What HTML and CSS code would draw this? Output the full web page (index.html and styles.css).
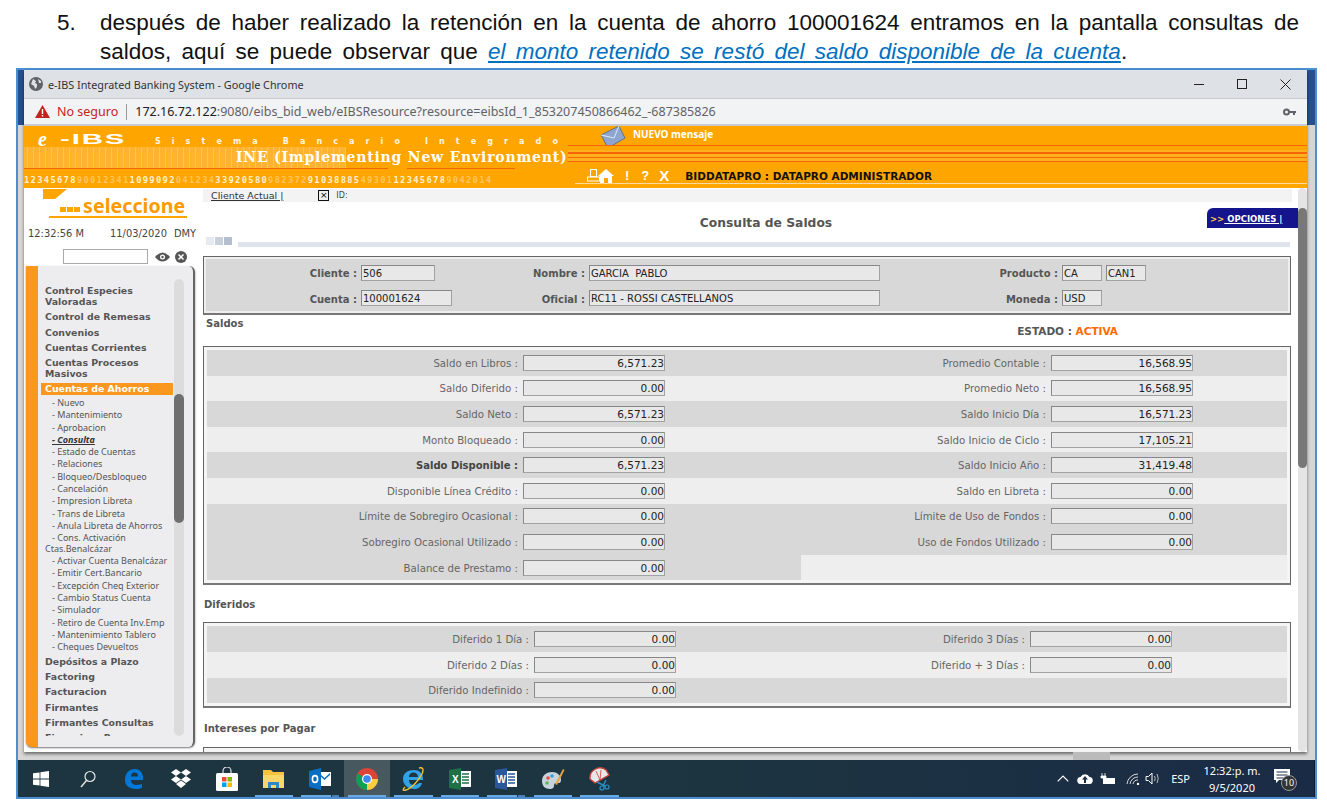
FILE: index.html
```html
<!DOCTYPE html>
<html lang="es">
<head>
  <meta charset="UTF-8">
  <title>Consulta de Saldos</title>
  <link rel="stylesheet" href="styles.css">
</head>
<body>
  <div class="note">
    <span class="note-num">5.</span>
    <div class="note-text">
      <p class="line-full">después de haber realizado la retención en la cuenta de ahorro 100001624 entramos en la pantalla consultas de</p>
      <p class="line-last">saldos, aquí se puede observar que <a href="#">el monto retenido se restó del saldo disponible de la cuenta</a>.</p>
    </div>
  </div>

  <div class="shot">
    <div class="browser">
      <div class="titlebar">
        <svg class="globe" width="14" height="14" viewBox="0 0 14 14"><circle cx="7" cy="7" r="7" fill="#5f6368"/><path d="M4 2l3 2-1 2 2 1v3l-2 2-1-3-3-2zM9 2l3 2 0 2-2 0z" fill="#dee1e6"/></svg>
        <span class="title-text">e-IBS Integrated Banking System - Google Chrome</span>
        <span class="win-btns">
          <svg width="10" height="10" viewBox="0 0 10 10"><path d="M0 5.5h10" stroke="#222" stroke-width="1"/></svg>
          <svg width="10" height="10" viewBox="0 0 10 10"><rect x=".5" y=".5" width="9" height="9" fill="none" stroke="#222"/></svg>
          <svg width="11" height="11" viewBox="0 0 11 11"><path d="M.5.5l10 10M10.5.5l-10 10" stroke="#222" stroke-width="1"/></svg>
        </span>
      </div>
      <div class="addressbar">
        <svg width="15" height="13" viewBox="0 0 15 13"><path d="M7.5 0L15 13H0z" fill="#c5221f"/><path d="M6.8 4h1.4v5H6.8zM6.8 10h1.4v1.4H6.8z" fill="#fff"/></svg>
        <span class="not-safe">No seguro</span>
        <span class="addr-sep"></span>
        <span class="url"><b>172.16.72.122</b>:9080/eibs_bid_web/eIBSResource?resource=eibsId_1_853207450866462_-687385826</span>
        <svg class="key" width="13" height="8" viewBox="0 0 13 8"><circle cx="3.5" cy="4" r="2.5" fill="none" stroke="#5f6368" stroke-width="2"/><path d="M6 3h7v2h-1v2h-2V5H6z" fill="#5f6368"/></svg>
      </div>

      <div class="banner">
        <div class="banner-row1">
          <span class="logo-e">e</span>
          <span class="logo-ibs">-IBS</span>
          <span class="sistema">Sistema Bancario Integrado</span>
          <svg class="envelope" width="26" height="24" viewBox="0 0 26 24"><path d="M1 10L19 1l6 12L8 23z" fill="#8ea6cf" stroke="#4a6390" stroke-width=".8"/><path d="M1 10l13 3L19 1" fill="none" stroke="#dfe7f5" stroke-width="1"/></svg>
          <span class="nuevo">NUEVO mensaje</span>
        </div>
        <div class="banner-row2">
          <div class="binary"></div>
          <span class="ine">INE (Implementing New Environment)</span>
          <div class="stripes"></div>
          <div class="redline redline-a"></div>
          <div class="redline redline-b"></div>
        </div>
        <div class="banner-row3">
          <span class="digits"><i>12345678</i>90012341<i>1099092</i>041234<i>33920580</i>982372<i>91038885</i>49301<i>12345678</i>9042014</span>
          <div class="tools">
            <svg width="13" height="13" viewBox="0 0 13 13"><rect x="3.5" y=".5" width="6" height="7" fill="none" stroke="#fff"/><rect x=".5" y="8" width="12" height="4" fill="none" stroke="#fff"/></svg>
            <svg class="tool-home" width="16" height="14" viewBox="0 0 16 14"><path d="M8 0l8 7h-2v7h-4V9H6v5H2V7H0z" fill="#fff"/></svg>
            <span class="tool-mark tool-bang">!</span>
            <span class="tool-mark tool-q">?</span>
            <span class="tool-mark tool-x">X</span>
            <span class="user">BIDDATAPRO : DATAPRO ADMINISTRADOR</span>
          </div>
        </div>
      </div>

      <div class="app">
        <aside class="side">
          <div class="brand">
            <div class="wedge"></div>
            <div class="brand-row">
              <span class="brand-dots"><i></i><i></i><i></i></span>
              <span class="brand-word">seleccione</span>
            </div>
            <div class="brand-line"></div>
          </div>
          <div class="clock"><span>12:32:56 M</span><span class="clock-date">11/03/2020</span><span>DMY</span></div>
          <div class="search">
            <span class="search-box"></span>
            <svg width="15" height="10" viewBox="0 0 15 10"><path d="M0 5q7.5-9 15 0q-7.5 9-15 0z" fill="#555"/><circle cx="7.5" cy="5" r="2.5" fill="#fff"/><circle cx="7.5" cy="5" r="1.2" fill="#555"/></svg>
            <svg width="12" height="12" viewBox="0 0 12 12"><circle cx="6" cy="6" r="6" fill="#555"/><path d="M3.5 3.5l5 5M8.5 3.5l-5 5" stroke="#fff" stroke-width="1.5"/></svg>
          </div>
          <nav class="menu">
            <div class="menu-list">
              <a class="m">Control Especies Valoradas</a>
              <a class="m">Control de Remesas</a>
              <a class="m">Convenios</a>
              <a class="m">Cuentas Corrientes</a>
              <a class="m">Cuentas Procesos Masivos</a>
              <a class="m m-on">Cuentas de Ahorros</a>
              <a class="s">- Nuevo</a>
              <a class="s">- Mantenimiento</a>
              <a class="s">- Aprobacion</a>
              <a class="s s-on">- Consulta</a>
              <a class="s">- Estado de Cuentas</a>
              <a class="s">- Relaciones</a>
              <a class="s">- Bloqueo/Desbloqueo</a>
              <a class="s">- Cancelación</a>
              <a class="s">- Impresion Libreta</a>
              <a class="s">- Trans de Libreta</a>
              <a class="s">- Anula Libreta de Ahorros</a>
              <a class="s s-wrap">- Cons. Activación Ctas.Benalcázar</a>
              <a class="s">- Activar Cuenta Benalcázar</a>
              <a class="s">- Emitir Cert.Bancario</a>
              <a class="s">- Excepción Cheq Exterior</a>
              <a class="s">- Cambio Status Cuenta</a>
              <a class="s">- Simulador</a>
              <a class="s">- Retiro de Cuenta Inv.Emp</a>
              <a class="s">- Mantenimiento Tablero</a>
              <a class="s s-end">- Cheques Devueltos</a>
              <a class="m">Depósitos a Plazo</a>
              <a class="m">Factoring</a>
              <a class="m">Facturacion</a>
              <a class="m">Firmantes</a>
              <a class="m">Firmantes Consultas</a>
              <a class="m">Financiera Banco</a>
            </div>
            <div class="menu-scroll"><div class="menu-thumb"></div></div>
          </nav>
        </aside>

        <main class="main">
          <div class="clientbar">
            <a class="client-link">Cliente Actual |</a>
            <span class="client-x">×</span>
            <span class="client-id">ID:</span>
          </div>
          <div class="title-row">
            <h1 class="page-title">Consulta de Saldos</h1>
            <div class="options"><b>&gt;&gt;</b><u>&nbsp;OPCIONES |</u></div>
          </div>
          <div class="content">
            <div class="divider"><span class="div-sq"><i></i><i></i><i></i></span><span class="div-bar"></span></div>

            <section class="panel panel-head">
              <div class="head-row">
                <span class="hl hl-1">Cliente :</span><span class="field fl w74">506</span>
                <span class="hl hl-2">Nombre :</span><span class="field fl w291">GARCIA&nbsp; PABLO</span>
                <span class="hl hl-3">Producto :</span><span class="field fl w40">CA</span><span class="field fl w40 ml4">CAN1</span>
              </div>
              <div class="head-row">
                <span class="hl hl-1">Cuenta :</span><span class="field fl w91">100001624</span>
                <span class="hl hl-2 gap-b">Oficial :</span><span class="field fl w291">RC11 - ROSSI CASTELLANOS</span>
                <span class="hl hl-3">Moneda :</span><span class="field fl w40">USD</span>
              </div>
            </section>

            <div class="saldos-head">
              <h2 class="sec">Saldos</h2>
              <div class="estado">ESTADO : <span>ACTIVA</span></div>
            </div>

            <section class="panel">
              <div class="row dark"><div class="cell-l"><span class="lbl">Saldo en Libros :</span><span class="field">6,571.23</span></div><div class="cell-r"><span class="lbl">Promedio Contable :</span><span class="field">16,568.95</span></div></div>
              <div class="row light"><div class="cell-l"><span class="lbl">Saldo Diferido :</span><span class="field">0.00</span></div><div class="cell-r"><span class="lbl">Promedio Neto :</span><span class="field">16,568.95</span></div></div>
              <div class="row dark"><div class="cell-l"><span class="lbl">Saldo Neto :</span><span class="field">6,571.23</span></div><div class="cell-r"><span class="lbl">Saldo Inicio Día :</span><span class="field">16,571.23</span></div></div>
              <div class="row light"><div class="cell-l"><span class="lbl">Monto Bloqueado :</span><span class="field">0.00</span></div><div class="cell-r"><span class="lbl">Saldo Inicio de Ciclo :</span><span class="field">17,105.21</span></div></div>
              <div class="row dark"><div class="cell-l"><span class="lbl strong">Saldo Disponible :</span><span class="field">6,571.23</span></div><div class="cell-r"><span class="lbl">Saldo Inicio Año :</span><span class="field">31,419.48</span></div></div>
              <div class="row light"><div class="cell-l"><span class="lbl">Disponible Línea Crédito :</span><span class="field">0.00</span></div><div class="cell-r"><span class="lbl">Saldo en Libreta :</span><span class="field">0.00</span></div></div>
              <div class="row dark"><div class="cell-l"><span class="lbl">Límite de Sobregiro Ocasional :</span><span class="field">0.00</span></div><div class="cell-r"><span class="lbl">Límite de Uso de Fondos :</span><span class="field">0.00</span></div></div>
              <div class="row dark"><div class="cell-l"><span class="lbl">Sobregiro Ocasional Utilizado :</span><span class="field">0.00</span></div><div class="cell-r"><span class="lbl">Uso de Fondos Utilizado :</span><span class="field">0.00</span></div></div>
              <div class="row light"><div class="cell-l dark"><span class="lbl">Balance de Prestamo :</span><span class="field">0.00</span></div><div class="cell-r"></div></div>
            </section>

            <h2 class="sec sec-dif">Diferidos</h2>
            <section class="panel panel-dif">
              <div class="row dark"><div class="cell-l"><span class="lbl">Diferido 1 Día :</span><span class="field">0.00</span></div><div class="cell-r"><span class="lbl">Diferido 3 Días :</span><span class="field">0.00</span></div></div>
              <div class="row light"><div class="cell-l"><span class="lbl">Diferido 2 Días :</span><span class="field">0.00</span></div><div class="cell-r"><span class="lbl">Diferido + 3 Días :</span><span class="field">0.00</span></div></div>
              <div class="row dark"><div class="cell-l"><span class="lbl">Diferido Indefinido :</span><span class="field">0.00</span></div><div class="cell-r"></div></div>
            </section>

            <h2 class="sec sec-int">Intereses por Pagar</h2>
            <section class="panel panel-cut"></section>
          </div>
        </main>

        <div class="scrollbar"><div class="scroll-thumb"></div></div>
      </div>
    </div>
    <div class="behind"><span class="behind-tab"></span></div>

    <div class="taskbar">
      <span class="tb"><svg width="16" height="16" viewBox="0 0 16 16"><path d="M0 2.3l6.6-.9v6.2H0zM7.4 1.3L16 0v7.6H7.4zM0 8.4h6.6v6.2L0 13.7zM7.4 8.4H16V16l-8.6-1.3z" fill="#fff"/></svg></span>
      <span class="tb"><svg width="16" height="18" viewBox="0 0 16 18"><circle cx="10" cy="6.5" r="5" fill="none" stroke="#e8e8e8" stroke-width="1.2"/><path d="M6.5 10.5L1 17" stroke="#e8e8e8" stroke-width="1.4"/></svg></span>
      <span class="tb"><svg width="20" height="22" viewBox="0 0 20 22"><path d="M1 12C1 5 5 1 11 1c5 0 8 4 8 9v2H7c0 3 2 5 6 5 2 0 4-.5 5-1.200v4c-1.500.8-3.500 1.200-6 1.200C5 21 1 17.500 1 12zM7 8.500h7C14 6 13 4.500 10.500 4.500 8.500 4.500 7 6 7 8.500z" fill="#0078d7"/></svg></span>
      <span class="tb"><svg width="22" height="20" viewBox="0 0 22 20"><path d="M6 0l5 3.500L6 7 1 3.500zM16 0l5 3.500L16 7l-5-3.500zM6 7l5 3.500L6 14l-5-3.500zM16 7l5 3.500L16 14l-5-3.500zM6 15l5-3.500 5 3.500-5 4z" fill="#fff"/></svg></span>
      <span class="tb"><svg width="22" height="24" viewBox="0 0 22 24"><path d="M7 7V4a4 4 0 018 0v3" fill="none" stroke="#ddd" stroke-width="1.200"/><rect y="6" width="22" height="18" rx="1.500" fill="#fff"/><rect x="6" y="10" width="4.500" height="4.500" fill="#e8502a"/><rect x="11.500" y="10" width="4.500" height="4.500" fill="#7fb900"/><rect x="6" y="15.500" width="4.500" height="4.500" fill="#00a1ef"/><rect x="11.500" y="15.500" width="4.500" height="4.500" fill="#ffb900"/></svg></span>
      <span class="tb tb-run"><svg width="21" height="19" viewBox="0 0 21 19"><path d="M0 1h8l2 2h11v16H0z" fill="#f6c33c"/><path d="M0 6h21v13H0z" fill="#fbd668"/><path d="M5 19v-6h11v6h-3v-3H8v3z" fill="#2f87c8"/></svg></span>
      <span class="tb tb-run tb-stack"><svg width="22" height="22" viewBox="0 0 22 22"><path d="M9 4h13v14H9z" fill="#fff"/><path d="M10 5l5.500 5L21 5v2l-5.500 5L10 7z" fill="#0a6fc2"/><path d="M0 3l12-3v22L0 19z" fill="#0a6fc2"/><ellipse cx="6" cy="11" rx="2.600" ry="3.400" fill="none" stroke="#fff" stroke-width="1.600"/></svg></span>
      <span class="tb tb-run tb-active"><svg width="22" height="22" viewBox="0 0 22 22"><circle cx="11" cy="11" r="11" fill="#db4437"/><path d="M11 11L1.500 5.500A11 11 0 0 0 11 22z" fill="#0f9d58"/><path d="M11 11h11A11 11 0 0 1 11 22z" fill="#ffcd40"/><circle cx="11" cy="11" r="5" fill="#fff"/><circle cx="11" cy="11" r="3.800" fill="#4285f4"/></svg></span>
      <span class="tb tb-run"><svg width="22" height="24" viewBox="0 0 22 24"><path d="M1 12C1 6 6 3 12 3c5 0 9 3 9 9v1H7c0 3 2 5 5 5 2 0 4-1 5-2h3c-1 4-4 6-8 6-6 0-11-4-11-10zM7 10h9c0-3-2-4.500-4.500-4.500S7 7 7 10z" fill="#2fa3e6"/><path d="M3 20C0 23 1 24 4 23c6-2 13-10 16-16 2-5 1-7-3-6" fill="none" stroke="#f2c12e" stroke-width="1.400"/></svg></span>
      <span class="tb tb-run"><svg width="22" height="22" viewBox="0 0 22 22"><path d="M10 3h12v16H10z" fill="#fff"/><path d="M13 6h7M13 9h7M13 12h7M13 15h7" stroke="#1e7145" stroke-width="1.400"/><path d="M0 2l12-2v22L0 20z" fill="#1e7145"/><text x="3" y="15" class="ico-letter">X</text></svg></span>
      <span class="tb tb-run tb-stack"><svg width="22" height="22" viewBox="0 0 22 22"><path d="M10 3h12v16H10z" fill="#fff"/><path d="M13 6h7M13 9h7M13 12h7M13 15h7" stroke="#2b579a" stroke-width="1.400"/><path d="M0 2l12-2v22L0 20z" fill="#2b579a"/><text x="1.500" y="15" class="ico-letter">W</text></svg></span>
      <span class="tb tb-run"><svg width="24" height="24" viewBox="0 0 24 24"><path d="M1 14C1 8 6 5 11 5c5 0 9 3 9 8 0 4-3 3-5 3s-2 2-2 3-1 3-4 3C4 22 1 19 1 14z" fill="#c8d4dc"/><circle cx="7" cy="11" r="1.800" fill="#e84c3d"/><circle cx="11" cy="9" r="1.800" fill="#3c9be0"/><circle cx="6" cy="16" r="1.800" fill="#5cb85c"/><path d="M14 17L22 2l1.500 1L16 18z" fill="#e8a33c"/></svg></span>
      <span class="tb tb-run"><svg width="24" height="24" viewBox="0 0 24 24"><path d="M3 12A10 10 0 0 1 19 3l3 5-14 8z" fill="#e8e8e8" stroke="#c9413a" stroke-width="1.400"/><path d="M9 4l4 9M14 3l-1 10" stroke="#c9413a" stroke-width=".8"/><path d="M10 15l8 4M19 13l-3 6" stroke="#2a8fc9" stroke-width="1.400"/><circle cx="15" cy="21" r="2" fill="none" stroke="#2a8fc9" stroke-width="1.200"/><circle cx="20" cy="20" r="2" fill="none" stroke="#2a8fc9" stroke-width="1.200"/></svg></span>

      <div class="tray">
        <svg width="12" height="7" viewBox="0 0 12 7"><path d="M.7 6.300L6 1l5.300 5.300" fill="none" stroke="#fff" stroke-width="1.200"/></svg>
        <svg class="tray-cloud" width="16" height="11" viewBox="0 0 16 11"><path d="M4 11a3.500 3.500 0 0 1-.5-7A5 5 0 0 1 12.500 4 3.500 3.500 0 0 1 12 11z" fill="#fff"/><path d="M8 3l3 3.500H9V10H7V6.500H5z" fill="#1b2c44"/></svg>
        <svg class="tray-batt" width="16" height="11" viewBox="0 0 16 11"><path d="M2 0v3M5 0v3M1 3h5v2H1z" stroke="#fff" fill="#fff" stroke-width=".8"/><rect x="3" y="5" width="12" height="6" fill="#fff"/></svg>
        <svg class="tray-wifi" width="14" height="12" viewBox="0 0 14 12"><path d="M1 11a11 11 0 0 1 11-10M4 11a8 8 0 0 1 8-7M7 11a5 5 0 0 1 5-4" fill="none" stroke="#d8d8d8" stroke-width="1"/><circle cx="12" cy="11" r="1.200" fill="#fff"/></svg>
        <svg class="tray-vol" width="16" height="13" viewBox="0 0 16 13"><path d="M1 4.500h2.500L7 1v11L3.500 8.500H1z" fill="none" stroke="#fff"/><path d="M9.500 4q1.500 2.500 0 5M12 2q2.500 4.500 0 9" fill="none" stroke="#bbb"/></svg>
        <span class="tray-lang">ESP</span>
        <span class="tray-clock"><span>12:32:p. m.</span><span>9/5/2020</span></span>
        <span class="tray-note">
          <svg width="16" height="14" viewBox="0 0 16 14"><path d="M0 0h16v11H5l-3 3v-3H0z" fill="#fff"/><path d="M2.500 3h11M2.500 6h11M2.500 9h7" stroke="#1b2c44"/></svg>
          <span class="tray-badge">10</span>
        </span>
      </div>
    </div>
  </div>
</body>
</html>
```

FILE: styles.css
```css
* {
  box-sizing: border-box;
}
html, body {
  margin: 0;
  height: 810px;
  overflow: hidden;
}
body {
  background: #fff;
  font-family: "DejaVu Sans", sans-serif;
  font-size: 10px;
}

/* document text over the screenshot */
.note {
  display: flex;
  height: 68px;
  padding: 8px 28px 0 57px;
  font-family: "Liberation Sans", Arial, sans-serif;
  font-size: 22.500px;
  line-height: 29px;
  color: #111;
}
.note-num {
  width: 43px;
  flex: none;
}
.note-text {
  flex: 1;
}
.note-text p {
  margin: 0;
  white-space: nowrap;
}
.line-full {
  text-align: justify;
  text-align-last: justify;
  white-space: normal !important;
}
.line-last {
  word-spacing: 4px;
}
.note-text a {
  color: #0070c0;
  font-style: italic;
}

/* screenshot frame */
.shot {
  width: 1301px;
  height: 731px;
  margin-left: 16px;
  border: 2px solid #4b8fd0;
  background: linear-gradient(#264f8e 0, #264f8e 55px, #d6d6d6 55px);
}
.browser {
  margin: 0 8px 0 6px;
  height: 682px;
  box-shadow: 0 2px 3px rgba(0,0,0,0.5);
  background: #fff;
}
.titlebar {
  display: flex;
  align-items: center;
  height: 28px;
  padding-left: 5px;
  background: #dee1e6;
  font-family: "Noto Sans", sans-serif;
  font-size: 10.800px;
  color: #333;
}
.title-text {
  margin-left: 5px;
}
.win-btns {
  margin-left: auto;
  display: flex;
  align-items: center;
  gap: 33px;
  padding-right: 16px;
}
.addressbar {
  display: flex;
  align-items: center;
  height: 28px;
  padding: 0 11px;
  background: #f1f3f4;
  border-top: 1px solid #c9cbcf;
  border-bottom: 2px solid #c9cbcf;
  font-family: "Noto Sans", sans-serif;
  font-size: 12.5px;
  color: #5f6368;
}
.not-safe {
  margin-left: 7px;
  color: #c5221f;
}
.addr-sep {
  width: 1px;
  height: 16px;
  margin: 0 8px;
  background: #999;
}
.url b {
  font-weight: 400;
  color: #202124;
}
.key {
  margin-left: auto;
}

/* orange header */
.banner {
  height: 62px;
  background: #ffa500;
  overflow: hidden;
}
.banner-row1 {
  display: flex;
  align-items: center;
  height: 21px;
  color: #fff;
}
.logo-e {
  margin: 5px 0 0 14px;
  font-family: "Liberation Serif", serif;
  font-style: italic;
  font-weight: 700;
  font-size: 20px;
  line-height: 16px;
}
.logo-ibs {
  width: 92px;
  margin: 5px 0 0 13px;
  font-family: "Liberation Sans", sans-serif;
  font-weight: 700;
  font-size: 15px;
  letter-spacing: 1px;
  line-height: 14px;
  transform: scaleX(1.95);
  transform-origin: left;
}
.sistema {
  width: 448px;
  margin-top: 10px;
  padding-left: 3px;
  font-family: "DejaVu Sans", sans-serif;
  font-weight: 700;
  font-size: 8px;
  line-height: 10px;
  letter-spacing: 11.100px;
  color: #fff6e0;
  white-space: nowrap;
}
.nuevo {
  margin-left: 7px;
  margin-top: -6px;
  font-family: "Noto Sans", sans-serif;
  font-weight: 700;
  font-size: 10px;
}
.banner-row2 {
  position: relative;
  height: 21px;
}
.binary {
  width: 322px;
  height: 22px;
  background: repeating-linear-gradient(90deg, #ffb32e 0 3px, #ffc25a 3px 4px, #ffb32e 4px 6px);
}
.ine {
  position: absolute;
  left: 212px;
  top: 0;
  font-family: "DejaVu Serif", serif;
  font-weight: 700;
  font-size: 14px;
  line-height: 20px;
  letter-spacing: .8px;
  color: #fff;
  white-space: nowrap;
}
.stripes {
  position: absolute;
  left: 544px;
  right: 0;
  top: -2px;
  height: 17px;
  background: linear-gradient(#f5650a 0 1px, #ffa500 1px 5px, #ffb01c 5px 7px, #f5650a 7px 8.500px, #ffb01c 8.500px 12px, #f56a0a 12px 13px, #ffb01c 13px 16px, #f5650a 16px 17px);
}
.redline {
  position: absolute;
  top: 21px;
  height: 1px;
  background: #f5650a;
}
.redline-a {
  left: 0;
  width: 364px;
}
.redline-b {
  left: 383px;
  width: 108px;
}
.banner-row3 {
  position: relative;
  height: 20px;
  display: flex;
  align-items: center;
}
.digits {
  font-family: "DejaVu Sans Mono", monospace;
  font-weight: 700;
  font-size: 8.800px;
  letter-spacing: 1.300px;
  color: #ffc45c;
  white-space: nowrap;
  width: 551px;
  overflow: hidden;
  margin-top: 4px;
}
.digits i {
  font-style: normal;
  color: #fff0d0;
}
.tools {
  display: flex;
  align-items: center;
  flex: 1;
  height: 16px;
  padding-left: 12px;
  margin-top: -4px;
  border-bottom: 1px solid #ffd9a0;
  color: #fff;
}
.tool-home {
  margin-left: -2px;
}
.tool-mark {
  font-family: "Liberation Sans", sans-serif;
  font-weight: 700;
  font-size: 13px;
}
.tool-bang {
  margin-left: 11px;
}
.tool-q {
  margin-left: 12px;
}
.tool-x {
  margin-left: 10px;
  font-size: 15px;
}
.user {
  margin-left: 16px;
  font-weight: 700;
  font-size: 10.500px;
  color: #111;
  white-space: nowrap;
}

/* app area */
.app {
  display: flex;
  height: 564px;
  overflow: hidden;
  background: #fff;
}
.side {
  width: 179px;
  flex: none;
  display: flex;
  flex-direction: column;
  background: #fff;
}
.brand {
  height: 32px;
}
.wedge {
  width: 24px;
  height: 10px;
  margin-left: 19px;
  margin-top: 1px;
  background: #ffa500;
  clip-path: polygon(0 0, 100% 0, 50% 100%, 0 100%);
}
.brand-row {
  display: flex;
  align-items: flex-end;
  height: 16px;
  margin-left: 36px;
  margin-top: -1px;
}
.brand-dots {
  display: flex;
  gap: 1px;
  margin-bottom: 2px;
}
.brand-dots i {
  width: 6px;
  height: 5px;
  background: #ffa500;
}
.brand-word {
  margin-left: 3px;
  font-family: "Noto Sans", sans-serif;
  font-weight: 700;
  font-size: 19.500px;
  letter-spacing: .1px;
  line-height: 16px;
  color: #ff9a00;
}
.brand-line {
  height: 2px;
  margin: 2px 16px 0 25px;
  background: #ffa500;
}
.clock {
  display: flex;
  margin-top: 7px;
  padding-left: 4px;
  height: 14px;
  font-size: 9.900px;
  line-height: 14px;
  color: #444;
  white-space: nowrap;
}
.clock-date {
  margin-left: 26px;
  margin-right: 7px;
}
.search {
  display: flex;
  align-items: center;
  margin-top: 8px;
  padding-left: 39px;
  height: 15px;
}
.search-box {
  width: 85px;
  height: 15px;
  margin-right: 7px;
  background: #fff;
  border: 1px solid #aaa;
}
.search svg + svg {
  margin-left: 5px;
}
.menu {
  display: flex;
  margin: 2px 0 0 2px;
  width: 169px;
  height: 481px;
  background: #ededf0;
  border-left: 12px solid #f9971e;
  border-right: 2px solid #666;
  border-radius: 0 6px 6px 6px;
  box-shadow: 0 1px 2px #777;
  padding: 13px 0 11px;
}
.menu-list {
  width: 135px;
  padding-top: 4px;
  overflow: hidden;
  font-size: 9.400px;
}
.menu-list a {
  display: block;
  color: #555;
}
.m {
  padding: 2px 0 2px 7px;
  line-height: 11.200px;
  font-weight: 700;
}
.m-on {
  margin: 2px 0 1.500px 3px;
  padding: 0 0 0 4px;
  height: 12px;
  line-height: 12px;
  background: #f9971e;
}
.menu-list a.m-on {
  color: #fff;
}
.s {
  padding-left: 14px;
  font-family: "Noto Sans", sans-serif;
  font-size: 9px;
  line-height: 12.300px;
}
.s-on {
  font-weight: 700;
  font-style: italic;
  text-decoration: underline;
}
.menu-list a.s-on {
  color: #333;
}
.s-wrap {
  padding-left: 7px;
  text-indent: 7px;
  line-height: 11px;
  margin-bottom: 1px;
}
.s-end {
  margin-bottom: .5px;
}
.menu-scroll {
  width: 10px;
  margin-left: 1px;
  border-radius: 5px;
  background: #dcdcdc;
  padding-top: 115px;
}
.menu-thumb {
  height: 129px;
  border-radius: 5px;
  background: #6f6f6f;
}

/* main column */
.main {
  width: 1095px;
  flex: none;
  height: 564px;
  overflow: hidden;
}
.clientbar {
  display: flex;
  align-items: center;
  height: 13px;
  margin: 1px 6px 0 0;
  padding-left: 8px;
  background: #f3f3f3;
  font-size: 9px;
}
.client-link {
  color: #333;
  text-decoration: underline;
  font-size: 9.500px;
}
.client-x {
  display: inline-block;
  width: 11px;
  height: 11px;
  margin-left: 35px;
  border: 1px solid #111;
  background: #eee;
  font-size: 9px;
  line-height: 8px;
  text-align: center;
}
.client-id {
  margin-left: 7px;
  color: #444;
  font-size: 8px;
}
.title-row {
  display: flex;
  height: 20px;
  margin-top: 6px;
}
.page-title {
  flex: 1;
  margin: 0;
  padding: 9px 0 0 122px;
  text-align: center;
  font-size: 12.300px;
  line-height: 13px;
  color: #555;
}
.options {
  width: 91px;
  height: 20px;
  padding: 5px 0 0 3px;
  background: #14148c;
  border-radius: 6px 0 0 0;
  font-size: 8.500px;
  line-height: 12px;
  font-weight: 700;
  color: #fff;
  white-space: nowrap;
  overflow: hidden;
}
.options b {
  color: #ffd23c;
}
.content {
  padding-right: 7px;
}
.divider {
  display: flex;
  align-items: flex-end;
  height: 10px;
  margin-top: 9px;
  padding-left: 3px;
}
.div-sq {
  display: flex;
  gap: 1px;
  margin-bottom: 2px;
}
.div-sq i {
  width: 8px;
  height: 8px;
  background: #c8d0dc;
}
.div-sq i:first-child {
  background: #e6e9ee;
}
.div-sq i:last-child {
  background: #b4bfd2;
}
.div-bar {
  flex: 1;
  height: 5px;
  margin: 0 1px 0 6px;
  background: #dfe3ec;
}
.panel {
  border: 1px solid #666;
  border-bottom: 2px solid #777;
  padding: 3px;
  background: #f5f5f5;
}
.panel-head {
  height: 59px;
  margin-top: 9px;
  padding: 3px 3px 2px;
  background: #d8d8d8;
  box-shadow: inset 0 0 0 2px #eee;
}
.head-row {
  display: flex;
  align-items: center;
  height: 25.600px;
}
.hl {
  margin-top: 2px;
  font-weight: 700;
  text-align: right;
  color: #555;
  padding-right: 4px;
  font-size: 10px;
  flex: none;
}
.hl-1 {
  width: 154px;
}
.hl-2 {
  width: 154px;
}
.gap-b {
  margin-left: -17px;
}
.hl-3 {
  width: 182px;
}
.field {
  display: block;
  flex: none;
  width: 142px;
  height: 16px;
  padding: 0 0 0 1px;
  background: #e8e8e8;
  border: 1px solid #a2a2a2;
  border-left-color: #888;
  border-top-color: #888;
  font-size: 10.500px;
  line-height: 15px;
  text-align: right;
  color: #222;
  white-space: nowrap;
  overflow: hidden;
}
.field.fl {
  text-align: left;
  font-size: 10px;
}
.field.w74 { width: 74px; }
.field.w91 { width: 91px; }
.field.w291 { width: 291px; }
.field.w40 { width: 40px; }
.field.ml4 { margin-left: 4px; }
.saldos-head {
  display: flex;
  justify-content: space-between;
  height: 31px;
  padding: 2px 173px 0 3px;
}
.sec {
  margin: 0;
  font-size: 10px;
  line-height: 14px;
  color: #555;
}
.estado {
  margin-top: 7px;
  font-weight: 700;
  font-size: 10.500px;
  line-height: 14px;
  color: #555;
}
.estado span {
  color: #ff6a00;
}
.row {
  display: flex;
  height: 25.600px;
}
.dark {
  background: #d8d8d8;
}
.light {
  background: #eee;
}
.cell-l, .cell-r {
  display: flex;
  align-items: center;
  flex: none;
}
.cell-l {
  width: 594px;
}
.cell-r {
  width: 486px;
}
.lbl {
  flex: none;
  margin-top: 1px;
  padding-right: 5px;
  text-align: right;
  font-size: 10.200px;
  color: #666;
  white-space: nowrap;
}
.strong {
  font-weight: 700;
  font-size: 10px;
  color: #444;
}
.cell-l .lbl {
  width: 316px;
}
.cell-r .lbl {
  width: 250px;
}
.sec-dif {
  margin-top: 11px;
  height: 26px;
  padding: 2px 0 0 1px;
}
.panel-dif .cell-l .lbl {
  width: 327px;
}
.panel-dif .cell-r .lbl {
  width: 229px;
}
.sec-int {
  margin-top: 13px;
  height: 26px;
  padding: 1px 0 0 1px;
}
.panel-cut {
  height: 30px;
}

.scrollbar {
  width: 9px;
  flex: none;
  padding-top: 20px;
  background: #e4e4e4;
  border-radius: 5px;
}
.scroll-thumb {
  height: 260px;
  border-radius: 5px;
  background: #787878;
}

.behind {
  height: 8px;
  padding-left: 1055px;
}
.behind-tab {
  display: block;
  width: 37px;
  height: 8px;
  background: #bbb;
}

/* windows taskbar */
.taskbar {
  display: flex;
  align-items: center;
  height: 37px;
  background: linear-gradient(90deg, #1d3540 0, #1d3540 50%, #1a2b46 100%);
}
.tb {
  position: relative;
  display: flex;
  align-items: center;
  justify-content: center;
  width: 46.500px;
  height: 37px;
  flex: none;
}
.tb-run::after {
  content: "";
  position: absolute;
  left: 4px;
  right: 4px;
  bottom: 0;
  height: 2px;
  background: #6aaae4;
}
.tb-stack::after {
  right: 13px;
}
.tb-stack::before {
  content: "";
  position: absolute;
  right: 5px;
  width: 7px;
  bottom: 0;
  height: 2px;
  background: #4c7fb0;
}
.tb-active {
  background: #47585f;
}
.ico-letter {
  font-family: "Liberation Sans", sans-serif;
  font-weight: 700;
  font-size: 10px;
  fill: #fff;
}
.tray {
  margin-left: auto;
  display: flex;
  align-items: center;
  height: 37px;
  padding-right: 18px;
  border-right: 1px solid #0e1a2b;
  color: #fff;
  font-family: "Noto Sans", sans-serif;
  font-size: 11px;
}
.tray-cloud {
  margin-left: 8px;
}
.tray-batt {
  margin-left: 7px;
}
.tray-wifi {
  margin-left: 10px;
}
.tray-vol {
  margin-left: 5px;
}
.tray-lang {
  margin-left: 10px;
}
.tray-clock {
  display: flex;
  flex-direction: column;
  align-items: center;
  margin-left: 14px;
  width: 56px;
  line-height: 17px;
  white-space: nowrap;
}
.tray-note {
  position: relative;
  display: block;
  margin-left: 14px;
  width: 22px;
  height: 20px;
}
.tray-badge {
  position: absolute;
  left: 7px;
  top: 6px;
  width: 16px;
  height: 16px;
  border-radius: 50%;
  border: 1px solid #999;
  background: #333;
  font-size: 9px;
  line-height: 14px;
  text-align: center;
}
```
